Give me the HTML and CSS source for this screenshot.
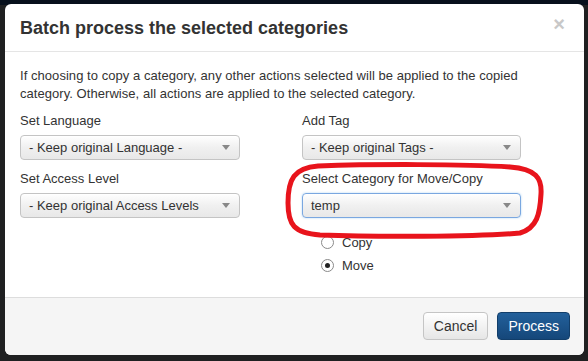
FILE: index.html
```html
<!DOCTYPE html>
<html>
<head>
<meta charset="utf-8">
<link rel="stylesheet" href="styles.css">
</head>
<body>
<div class="backdrop">
  <div class="modal">
    <div class="modal-header">
      <h3 class="title">Batch process the selected categories</h3>
      <span class="close">×</span>
    </div>
    <div class="modal-body">
      <p class="intro">If choosing to copy a category, any other actions selected will be applied to the copied category. Otherwise, all actions are applied to the selected category.</p>
      <div class="grid">
        <div class="col">
          <label class="lbl">Set Language</label>
          <div class="select w220"><span>- Keep original Language -</span><i class="caret"></i></div>
          <label class="lbl">Set Access Level</label>
          <div class="select w220"><span>- Keep original Access Levels</span><i class="caret"></i></div>
        </div>
        <div class="col">
          <label class="lbl">Add Tag</label>
          <div class="select w219"><span>- Keep original Tags -</span><i class="caret"></i></div>
          <label class="lbl">Select Category for Move/Copy</label>
          <div class="select w219 focus"><span>temp</span><i class="caret"></i></div>
          <div class="radios">
            <div class="radio"><span class="dot"></span>Copy</div>
            <div class="radio"><span class="dot on"></span>Move</div>
          </div>
        </div>
      </div>
    </div>
    <div class="modal-footer">
      <button class="btn">Cancel</button>
      <button class="btn primary">Process</button>
    </div>
    <svg class="annot" width="262" height="78" viewBox="0 0 262 78">
      <path d="M34 4 C90 2 180 2 226 5 C252 7 258 16 257 32 C256 52 253 66 236 71 C190 75 90 75 36 73 C10 71 4 63 4 41 C4 17 10 6 34 4 Z" fill="none" stroke="#e8141c" stroke-width="5"/>
    </svg>
  </div>
</div>
</body>
</html>
```
FILE: styles.css
```css
html, body {
  margin: 0;
  padding: 0;
}
body {
  width: 588px;
  height: 361px;
  overflow: hidden;
  background: #1f1f1f;
  font-family: "Liberation Sans", Arial, sans-serif;
  color: #333;
}
.backdrop {
  height: 361px;
  padding: 4px 4px 0 5px;
  box-sizing: border-box;
  background: linear-gradient(#07101c 0, #07101c 5px, #1f2021 5px);
}
.modal {
  position: relative;
  width: 579px;
  height: 351px;
  background: #fff;
  border-radius: 6px;
  overflow: hidden;
  display: flex;
  flex-direction: column;
}
.modal-header {
  height: 48px;
  box-sizing: border-box;
  border-bottom: 1px solid #e5e5e5;
  padding: 0 15px;
  display: flex;
  align-items: center;
  justify-content: space-between;
}
.title {
  margin: 0;
  font-size: 18px;
  font-weight: bold;
  color: #333;
  position: relative;
  top: 1px;
}
.close {
  font-size: 20px;
  font-weight: bold;
  color: #c8c8c8;
  line-height: 20px;
  margin-right: 4px;
  position: relative;
  top: -4px;
}
.modal-body {
  padding: 15px 15px 0 15px;
  flex: 1;
  font-size: 13px;
  line-height: 18px;
}
.intro {
  margin: 0 0 9px 0;
  letter-spacing: 0.05px;
}
.grid {
  display: grid;
  grid-template-columns: 282px 1fr;
}
.col {
  display: flex;
  flex-direction: column;
  align-items: flex-start;
}
.lbl {
  display: block;
  line-height: 18px;
}
.select {
  box-sizing: border-box;
  height: 25px;
  margin: 5px 0 10px 0;
  border: 1px solid #c4c4c4;
  border-radius: 4px;
  background: linear-gradient(#ffffff, #f0f0f0 50%, #e8e8e8);
  display: flex;
  align-items: center;
  justify-content: space-between;
  padding: 0 9px 0 8px;
  font-size: 13px;
  color: #333;
  box-shadow: inset 0 1px 0 #fff;
}
.w220 { width: 220px; }
.w219 { width: 219px; }
.select.focus {
  border-color: #7aa7e0;
  box-shadow: 0 0 2px rgba(82,168,236,0.5);
}
.caret {
  width: 0;
  height: 0;
  border-left: 4px solid transparent;
  border-right: 4px solid transparent;
  border-top: 5px solid #888;
}
.radios {
  padding-left: 19px;
  margin-top: 3px;
}
.radio {
  display: flex;
  align-items: center;
  height: 23px;
}
.dot {
  box-sizing: border-box;
  width: 13px;
  height: 13px;
  border: 1px solid #8a8a8a;
  border-radius: 50%;
  margin-right: 8px;
  background: #fff;
  position: relative;
}
.dot.on::after {
  content: "";
  position: absolute;
  left: 3px;
  top: 3px;
  width: 5px;
  height: 5px;
  border-radius: 50%;
  background: #222;
}
.modal-footer {
  height: 58px;
  box-sizing: border-box;
  border-top: 1px solid #ddd;
  background: #f5f5f5;
  display: flex;
  justify-content: flex-end;
  align-items: flex-start;
  padding: 14px 14px 0 0;
  gap: 9px;
}
.btn {
  height: 28px;
  font-family: "Liberation Sans", Arial, sans-serif;
  font-size: 14px;
  border-radius: 4px;
  border: 1px solid #c5c5c5;
  background: linear-gradient(#ffffff, #e6e6e6);
  color: #333;
  padding: 0 10px;
}
.btn.primary {
  background: linear-gradient(#22609b, #15477a);
  border-color: #123e6a;
  color: #fff;
}
.annot {
  position: absolute;
  left: 279px;
  top: 158px;
}
```
